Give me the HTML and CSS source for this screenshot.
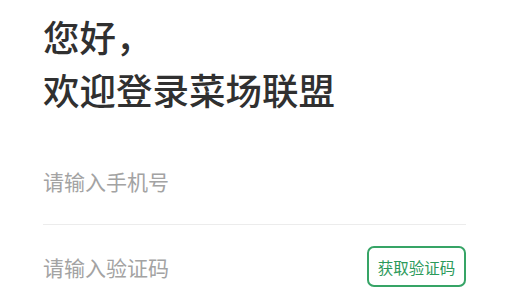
FILE: index.html
```html
<!DOCTYPE html>
<html lang="zh-CN">
<head>
<meta charset="utf-8">
<title>登录</title>
<link rel="stylesheet" href="styles.css">
</head>
<body>
<div class="page">
  <h1 class="title">您好，<br>欢迎登录菜场联盟</h1>
  <div class="form">
    <div class="field field-phone">
      <input class="input" type="text" placeholder="请输入手机号">
    </div>
    <div class="field field-code">
      <input class="input" type="text" placeholder="请输入验证码">
      <button class="code-btn" type="button">获取验证码</button>
    </div>
  </div>
</div>
</body>
</html>
```
FILE: styles.css
```css
html, body {
  margin: 0;
  padding: 0;
  background: #ffffff;
}
body {
  font-family: "Noto Sans CJK SC", "Noto Sans", sans-serif;
  color: #333333;
}
.page {
  width: 423px;
  padding: 10px 0 0 43px;
}
.title {
  margin: 0;
  font-size: 36.5px;
  line-height: 53px;
  font-weight: 500;
  color: #303030;
}
.form {
  margin-top: 22px;
  display: flex;
  flex-direction: column;
}
.field {
  display: flex;
  align-items: center;
}
.field-phone {
  height: 86px;
  border-bottom: 1px solid #ececec;
}
.field-code {
  height: 83px;
}
.input {
  flex: 1;
  min-width: 0;
  border: none;
  outline: none;
  padding: 0;
  margin: 0;
  font-family: "Noto Sans CJK SC", sans-serif;
  font-size: 21px;
  color: #333333;
  background: transparent;
}
.input::placeholder {
  color: #a3a3a3;
}
.code-btn {
  width: 99px;
  height: 41px;
  padding: 0;
  border: 2px solid #36a466;
  border-radius: 7px;
  background: #ffffff;
  color: #2c9a5a;
  font-family: "Noto Sans CJK SC", sans-serif;
  font-size: 15.5px;
}
```
